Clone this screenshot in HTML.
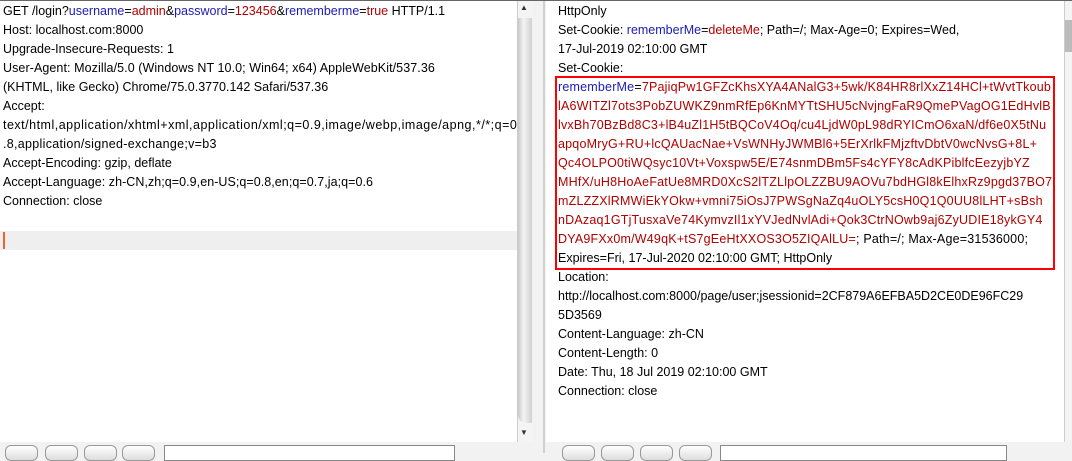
<!DOCTYPE html>
<html><head><style>
body{margin:0;width:1072px;height:453px;overflow:hidden;background:#f2f2f2;font-family:"Liberation Sans",sans-serif;font-size:12.5px;color:#000;position:relative}
.pane{position:absolute;top:0;background:#fff;overflow:hidden}
.l{position:absolute;white-space:pre;line-height:19px;height:19px}
.b{color:#1a1ab8}.r{color:#b00000}
.rl{letter-spacing:0.2px}
.sb{position:absolute;background:#e8e8e8}
.btn{position:absolute;top:445px;width:31px;height:14px;border:1px solid #999;border-radius:6px;background:linear-gradient(#fff,#ddd)}
.fld{position:absolute;top:445px;height:14px;border:1px solid #888;background:#fff}
</style></head><body>
<div style="position:absolute;left:0;top:0;width:1072px;height:1px;background:#666"></div>
<div class="pane" style="left:0;top:1px;width:517px;height:441px">
<div style="position:absolute;left:0;top:230px;width:517px;height:19px;background:#efefef"></div>
<div style="position:absolute;left:3px;top:231px;width:2px;height:17px;background:#f06030"></div>
<div class="l" style="left:3px;top:1px">GET /login?<span class="b">username</span>=<span class="r">admin</span>&amp;<span class="b">password</span>=<span class="r">123456</span>&amp;<span class="b">rememberme</span>=<span class="r">true</span> HTTP/1.1</div>
<div class="l" style="left:3px;top:20px">Host: localhost.com:8000</div>
<div class="l" style="left:3px;top:39px">Upgrade-Insecure-Requests: 1</div>
<div class="l" style="left:3px;top:58px;letter-spacing:0.08px">User-Agent: Mozilla/5.0 (Windows NT 10.0; Win64; x64) AppleWebKit/537.36</div>
<div class="l" style="left:3px;top:77px">(KHTML, like Gecko) Chrome/75.0.3770.142 Safari/537.36</div>
<div class="l" style="left:3px;top:96px">Accept:</div>
<div class="l" style="left:3px;top:115px;letter-spacing:0.5px">text/html,application/xhtml+xml,application/xml;q=0.9,image/webp,image/apng,*/*;q=0</div>
<div class="l" style="left:3px;top:134px;letter-spacing:0.3px">.8,application/signed-exchange;v=b3</div>
<div class="l" style="left:3px;top:153px">Accept-Encoding: gzip, deflate</div>
<div class="l" style="left:3px;top:172px;letter-spacing:0.05px">Accept-Language: zh-CN,zh;q=0.9,en-US;q=0.8,en;q=0.7,ja;q=0.6</div>
<div class="l" style="left:3px;top:191px">Connection: close</div>
</div>
<div class="sb" style="left:517px;top:1px;width:15px;height:441px;background:#f4f4f4;border-left:1px solid #ccc"></div>
<div style="position:absolute;left:518px;top:18px;width:14px;height:405px;border-radius:0 0 0 8px;background:linear-gradient(90deg,#c8c8c8,#f4f4f4 40%,#d0d0d0)"></div>
<div style="position:absolute;left:520px;top:3px;font-size:8px;color:#333">▲</div>
<div style="position:absolute;left:520px;top:428px;font-size:8px;color:#333">▼</div>
<div style="position:absolute;left:543px;top:1px;width:2px;height:452px;background:#d0d0d0"></div>
<div class="pane" style="left:546px;top:1px;width:518px;height:441px">
<div style="position:absolute;left:9px;top:75px;width:496px;height:190px;border:2px solid #f00"></div>
<div class="l" style="left:12px;top:1px">HttpOnly</div>
<div class="l" style="left:12px;top:20px">Set-Cookie: <span class="b">rememberMe</span>=<span class="r">deleteMe</span>; Path=/; Max-Age=0; Expires=Wed,</div>
<div class="l" style="left:12px;top:39px">17-Jul-2019 02:10:00 GMT</div>
<div class="l" style="left:12px;top:58px">Set-Cookie:</div>
<div class="l rl" style="left:12px;top:77px"><span class="b">rememberMe</span>=<span class="r">7PajiqPw1GFZcKhsXYA4ANalG3+5wk/K84HR8rlXxZ14HCl+tWvtTkoub</span></div>
<div class="l r rl" style="left:12px;top:96px">lA6WITZl7ots3PobZUWKZ9nmRfEp6KnMYTtSHU5cNvjngFaR9QmePVagOG1EdHvlB</div>
<div class="l r rl" style="left:12px;top:115px">lvxBh70BzBd8C3+lB4uZl1H5tBQCoV4Oq/cu4LjdW0pL98dRYICmO6xaN/df6e0X5tNu</div>
<div class="l r rl" style="left:12px;top:134px">apqoMryG+RU+lcQAUacNae+VsWNHyJWMBl6+5ErXrlkFMjzftvDbtV0wcNvsG+8L+</div>
<div class="l r rl" style="left:12px;top:153px">Qc4OLPO0tiWQsyc10Vt+Voxspw5E/E74snmDBm5Fs4cYFY8cAdKPiblfcEezyjbYZ</div>
<div class="l r rl" style="left:12px;top:172px">MHfX/uH8HoAeFatUe8MRD0XcS2lTZLlpOLZZBU9AOVu7bdHGl8kElhxRz9pgd37BO7</div>
<div class="l r rl" style="left:12px;top:191px">mZLZZXlRMWiEkYOkw+vmni75iOsJ7PWSgNaZq4uOLY5csH0Q1Q0UU8lLHT+sBsh</div>
<div class="l r rl" style="left:12px;top:210px">nDAzaq1GTjTusxaVe74KymvzIl1xYVJedNvlAdi+Qok3CtrNOwb9aj6ZyUDIE18ykGY4</div>
<div class="l rl" style="left:12px;top:229px"><span class="r">DYA9FXx0m/W49qK+tS7gEeHtXXOS3O5ZIQAlLU=</span>; Path=/; Max-Age=31536000;</div>
<div class="l" style="left:12px;top:248px">Expires=Fri, 17-Jul-2020 02:10:00 GMT; HttpOnly</div>
<div class="l" style="left:12px;top:267px">Location:</div>
<div class="l" style="left:12px;top:286px">http://localhost.com:8000/page/user;jsessionid=2CF879A6EFBA5D2CE0DE96FC29</div>
<div class="l" style="left:12px;top:305px">5D3569</div>
<div class="l" style="left:12px;top:324px">Content-Language: zh-CN</div>
<div class="l" style="left:12px;top:343px">Content-Length: 0</div>
<div class="l" style="left:12px;top:362px">Date: Thu, 18 Jul 2019 02:10:00 GMT</div>
<div class="l" style="left:12px;top:381px">Connection: close</div>
</div>
<div class="sb" style="left:1064px;top:1px;width:8px;height:441px;background:#f4f4f4;border-left:1px solid #ccc"></div>
<div style="position:absolute;left:1065px;top:20px;width:7px;height:32px;background:#bbb"></div>
<div class="btn" style="left:5px"></div><div class="btn" style="left:45px"></div><div class="btn" style="left:84px"></div><div class="btn" style="left:122px"></div>
<div class="fld" style="left:164px;width:289px"></div>
<div class="btn" style="left:562px"></div><div class="btn" style="left:601px"></div><div class="btn" style="left:640px"></div><div class="btn" style="left:679px"></div>
<div class="fld" style="left:720px;width:285px"></div>
</body></html>
